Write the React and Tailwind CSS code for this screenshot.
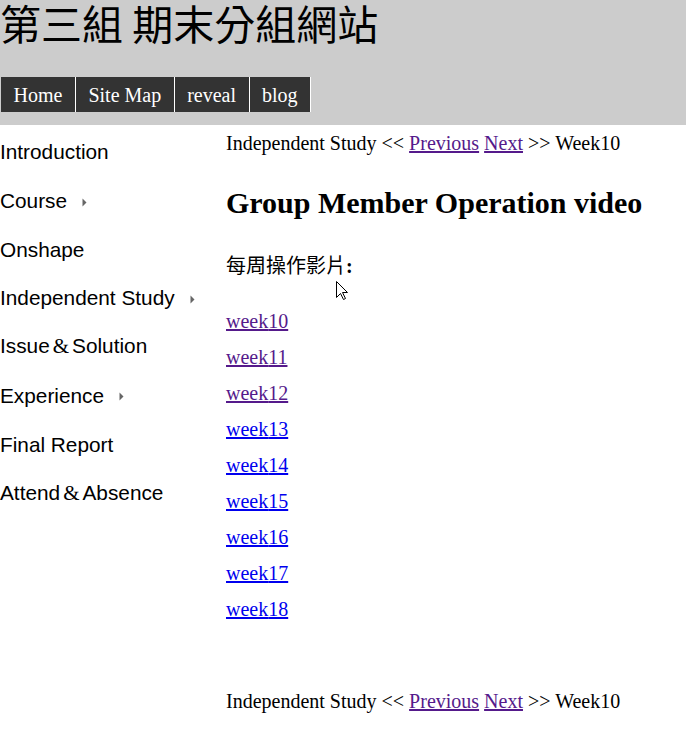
import React from "react";

const serif = { fontFamily: '"Liberation Serif", "Noto Sans CJK TC", serif' };

function Tri() {
  return (
    <svg width="5" height="9" viewBox="0 0 5 9" className="ml-[15px] mt-[3px] shrink-0">
      <path d="M0.5 0.5 L4.5 4.5 L0.5 8.5 Z" fill="#666" />
    </svg>
  );
}

function Amp() {
  return (
    <span className="mx-[3px] font-['Liberation_Serif',serif] text-[21px]">&amp;</span>
  );
}

function Crumb() {
  return (
    <div className="text-[20px] leading-[24px] text-black whitespace-nowrap">
      Independent Study &lt;&lt;{" "}
      <a className="text-[#551a8b] underline" href="#">Previous</a>{" "}
      <a className="text-[#551a8b] underline" href="#">Next</a> &gt;&gt; Week10
    </div>
  );
}

export default function App() {
  const side = [
    { t: "Introduction" },
    { t: "Course", arrow: true },
    { t: "Onshape" },
    { t: "Independent Study", arrow: true },
    { t: ["Issue", "Solution"] },
    { t: "Experience", arrow: true },
    { t: "Final Report" },
    { t: ["Attend", "Absence"] },
  ];
  const weeks = [10, 11, 12, 13, 14, 15, 16, 17, 18];
  return (
    <div className="relative w-[686px] min-h-[750px] bg-white" style={serif}>
      <header className="bg-[#cccccc] h-[125px] flex flex-col">
        <h1 className="m-0 text-[41px] leading-[44px] font-normal text-black font-['Noto_Sans_CJK_TC',sans-serif] whitespace-nowrap">
          第三組 期末分組網站
        </h1>
        <nav className="mt-[33px] ml-px flex">
          {["Home", "Site Map", "reveal", "blog"].map((n) => (
            <a
              key={n}
              href="#"
              className="bg-[#333333] text-white text-[20px] h-[35px] leading-[36px] px-[12.5px] border-r border-white whitespace-nowrap"
            >
              {n}
            </a>
          ))}
        </nav>
      </header>
      <div className="flex">
        <aside className="w-[226px] shrink-0 pt-[2.65px] font-['Liberation_Sans',sans-serif] text-[20.8px] text-black">
          {side.map((s, i) => (
            <div key={i} className="h-[48.7px] flex items-center whitespace-nowrap">
              {Array.isArray(s.t) ? (
                <span>
                  {s.t[0]}
                  <Amp />
                  {s.t[1]}
                </span>
              ) : (
                <span>{s.t}</span>
              )}
              {s.arrow && <Tri />}
            </div>
          ))}
        </aside>
        <main className="flex-1 pt-[6px]">
          <Crumb />
          <h2 className="mt-[30px] text-[30px] leading-[36px] font-bold text-black whitespace-nowrap">
            Group Member Operation video
          </h2>
          <div className="mt-[32px] text-[20px] leading-[24px] font-normal text-black font-['Noto_Sans_CJK_TC',sans-serif]">
            每周操作影片<span className="font-['Liberation_Serif',serif] font-bold">:</span>
          </div>
          <div className="mt-[25px]">
            {weeks.map((w) => (
              <div key={w} className="h-[36px] leading-[36px] text-[20px]">
                <a
                  href="#"
                  className={"underline " + (w <= 12 ? "text-[#551a8b]" : "text-[#0000ee]")}
                >
                  week{w}
                </a>
              </div>
            ))}
          </div>
          <div className="mt-[62px]">
            <Crumb />
          </div>
        </main>
      </div>
      <svg
        className="absolute left-[336px] top-[281px]"
        width="13"
        height="20"
        viewBox="0 0 13 20"
      >
        <path
          d="M0.5 0.5 L0.5 16.5 L4.5 12.5 L7.5 18.5 L9.5 17.5 L6.5 11.5 L11.5 11.5 Z"
          fill="white"
          stroke="black"
          strokeWidth="1"
          strokeLinejoin="miter"
        />
      </svg>
    </div>
  );
}
